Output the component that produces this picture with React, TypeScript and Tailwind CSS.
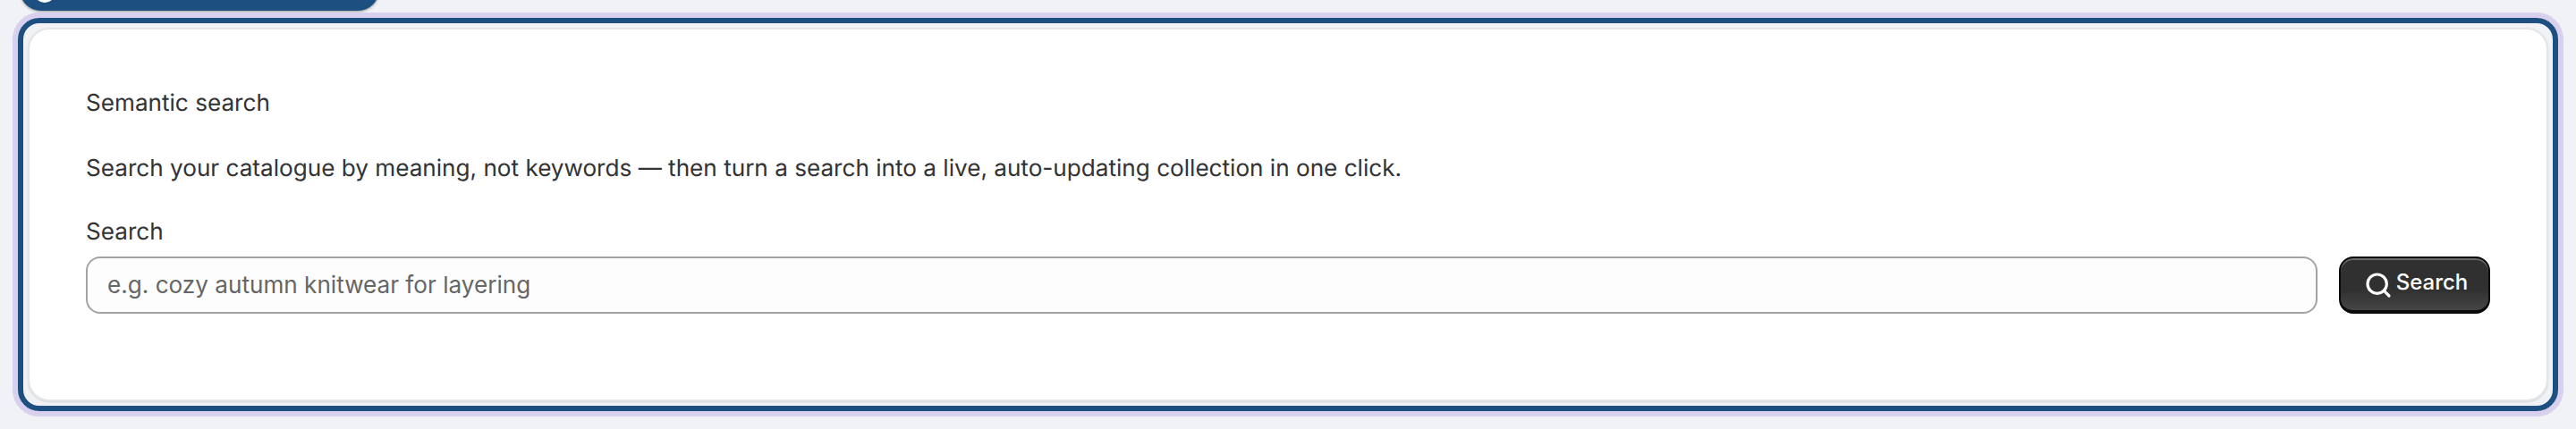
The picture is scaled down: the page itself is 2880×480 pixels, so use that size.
import { Search } from "lucide-react";

export default function App() {
  return (
    <div className="h-[480px] w-full overflow-hidden bg-[#f0f2f5] font-['Inter',sans-serif] text-[#333336] [text-rendering:geometricPrecision]">
      <div className="ml-[22px] mt-[-28px] h-[40px] w-[402px] rounded-b-[24px] bg-[#1d5080] pl-[16px] pt-[7px] shadow-[0_1px_3px_rgba(0,0,0,0.4)]">
        <div className="h-[24px] w-[24px] rounded-full bg-white" />
      </div>
      <div className="mx-[14px] mt-[2px] h-[452px] rounded-[30px] border-[6px] border-[#d9cfee]">
        <div className="h-full rounded-[24px] border-[6px] border-[#1d5080] bg-[#f0f2f5] p-[5px]">
          <div className="flex h-full flex-col rounded-[24px] border-2 border-[#e4e5e7] bg-white px-[63px] pt-[63px] shadow-[0_1px_2px_rgba(0,0,0,0.12)]">
            <p className="text-[26.13px] leading-[40px]">Semantic search</p>
            <p className="mt-[33px] text-[26.13px] leading-[40px]">
              Search your catalogue by meaning, not keywords — then turn a search into a live, auto-updating collection in one click.
            </p>
            <label className="mt-[31px] text-[26.13px] leading-[40px]">Search</label>
            <div className="mt-[7px] flex items-stretch gap-[24px]">
              <input
                readOnly
                placeholder="e.g. cozy autumn knitwear for layering"
                className="h-[64px] min-w-0 flex-1 rounded-[16px] border-2 border-[#a3a3a3] bg-[#fdfdfd] px-[22px] pb-[2px] text-[26.13px] outline-none placeholder:text-[#666666]"
              />
              <button className="flex h-[64px] w-[169px] items-center justify-center gap-[4px] rounded-[16px] border-2 border-b-[4px] border-[#0a0a0a] bg-gradient-to-b from-[#303030] from-60% to-[#464646] pl-[3px] text-[24px] font-medium text-white shadow-[inset_0_2px_0_#6a6a6a]">
                <Search size={32} strokeWidth={2.4} className="mt-[2px]" />
                <span className="mt-[-5px]">Search</span>
              </button>
            </div>
          </div>
        </div>
      </div>
    </div>
  );
}
